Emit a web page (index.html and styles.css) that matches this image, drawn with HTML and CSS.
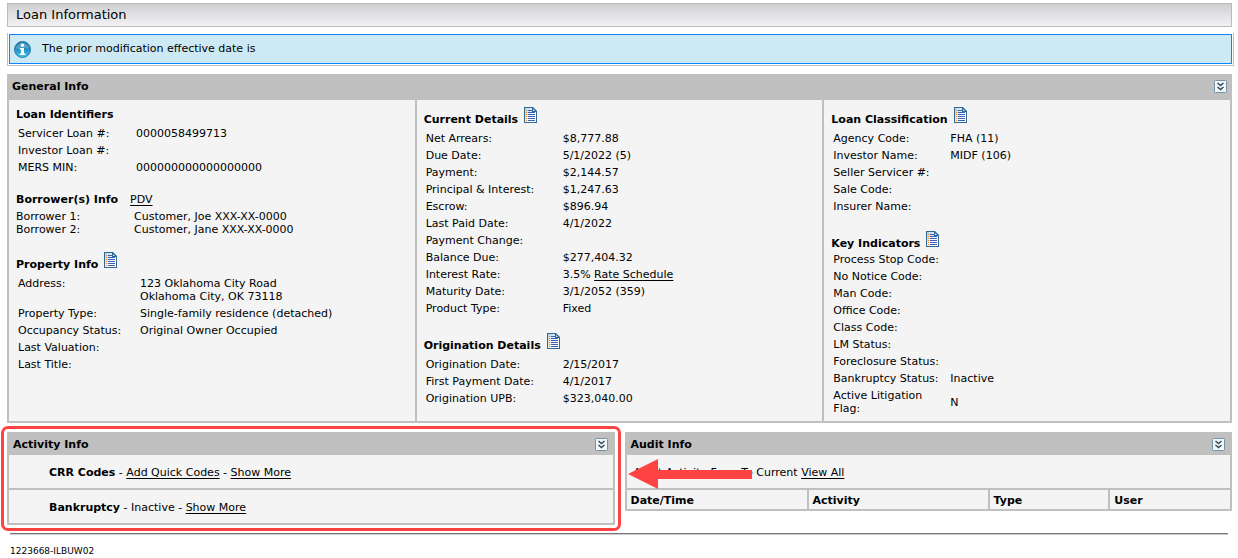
FILE: index.html
```html
<!DOCTYPE html>
<html lang="en">
<head>
<meta charset="utf-8">
<title>Loan Information</title>
<link rel="stylesheet" href="styles.css">
</head>
<body>
<svg class="defs" width="0" height="0" aria-hidden="true">
  <defs>
    <linearGradient id="page-fill" x1="0" y1="0" x2="1" y2="1">
      <stop offset="0" stop-color="#b4d2e6"/><stop offset=".6" stop-color="#ffffff"/>
    </linearGradient>
    <linearGradient id="info-fill" x1="0" y1="0" x2="0" y2="1">
      <stop offset="0" stop-color="#1b6f9f"/><stop offset=".5" stop-color="#2592c4"/><stop offset="1" stop-color="#4cc8ee"/>
    </linearGradient>
  </defs>
  <symbol id="doc" viewBox="0 0 13 16">
    <path d="M0 0H9L13 4V16H0Z" fill="#2f6a94"/>
    <path d="M1 1H8V5H12V15H1Z" fill="url(#page-fill)"/>
    <path d="M9 2L11 4H9Z" fill="#d5e5f0"/>
    <path d="M4 3H8V4H4ZM4 5H11V6H4ZM4 7H11V8H4ZM4 9H11V10H4ZM4 11H11V12H4ZM4 13H11V14H4Z" fill="#3e5fb8"/>
    <path d="M1.800 3H3.200V4H1.800ZM1.800 5H3.200V6H1.800ZM1.800 7H3.200V8H1.800ZM1.800 9H3.200V10H1.800ZM1.800 11H3.200V12H1.800ZM1.800 13H3.200V14H1.800Z" fill="#f98a12"/>
  </symbol>
  <symbol id="chevrons" viewBox="0 0 13 13">
    <rect x=".5" y=".5" width="12" height="12" rx="1" fill="#eef8fb" stroke="#7592a6"/>
    <path d="M3.500 3L6.500 5.500L9.500 3M3.500 7L6.500 9.500L9.500 7" fill="none" stroke="#3b4650" stroke-width="1.500"/>
  </symbol>
</svg>

<h1 class="title">Loan Information</h1>

<div class="notice-frame">
  <div class="notice">
    <svg class="info" viewBox="0 0 17 17" aria-hidden="true">
      <circle cx="8.500" cy="8.500" r="8" fill="url(#info-fill)" stroke="#1d7fae"/>
      <path d="M2 8a6.500 6.500 0 0 1 13 0q-6.500-3-13 0z" fill="#fff" opacity=".22"/>
      <circle cx="8.500" cy="4.200" r="1.700" fill="#fff"/>
      <path d="M5.700 7H10V12.500H11.300V14H5.700V12.500H7V8.500H5.700Z" fill="#fff"/>
    </svg>
    <span>The prior modification effective date is</span>
  </div>
</div>

<section class="panel">
  <header class="bar bar-tall">
    <h2>General Info</h2>
    <button class="toggle" aria-label="Collapse General Info"><svg><use href="#chevrons"/></svg></button>
  </header>
  <div class="columns">
    <div class="column">
      <section class="group">
        <h3 class="plain">Loan Identifiers</h3>
        <table class="fields identifiers">
          <tr><th scope="row">Servicer Loan #:</th><td>0000058499713</td></tr>
          <tr><th scope="row">Investor Loan #:</th><td></td></tr>
          <tr><th scope="row">MERS MIN:</th><td>000000000000000000</td></tr>
        </table>
      </section>
      <section class="group">
        <h3 class="plain">Borrower(s) Info <a href="#">PDV</a></h3>
        <table class="fields dense">
          <tr><th scope="row">Borrower 1:</th><td>Customer, Joe XXX-XX-0000</td></tr>
          <tr><th scope="row">Borrower 2:</th><td>Customer, Jane XXX-XX-0000</td></tr>
        </table>
      </section>
      <section class="group">
        <h3><span>Property Info</span><svg class="doc"><use href="#doc"/></svg></h3>
        <table class="fields property">
          <tr><th scope="row">Address:</th><td>123 Oklahoma City Road<br>Oklahoma City, OK 73118</td></tr>
          <tr><th scope="row">Property Type:</th><td>Single-family residence (detached)</td></tr>
          <tr><th scope="row">Occupancy Status:</th><td>Original Owner Occupied</td></tr>
          <tr><th scope="row">Last Valuation:</th><td></td></tr>
          <tr><th scope="row">Last Title:</th><td></td></tr>
        </table>
      </section>
    </div>
    <div class="column">
      <section class="group">
        <h3><span>Current Details</span><svg class="doc"><use href="#doc"/></svg></h3>
        <table class="fields details">
          <tr><th scope="row">Net Arrears:</th><td>$8,777.88</td></tr>
          <tr><th scope="row">Due Date:</th><td>5/1/2022 (5)</td></tr>
          <tr><th scope="row">Payment:</th><td>$2,144.57</td></tr>
          <tr><th scope="row">Principal &amp; Interest:</th><td>$1,247.63</td></tr>
          <tr><th scope="row">Escrow:</th><td>$896.94</td></tr>
          <tr><th scope="row">Last Paid Date:</th><td>4/1/2022</td></tr>
          <tr><th scope="row">Payment Change:</th><td></td></tr>
          <tr><th scope="row">Balance Due:</th><td>$277,404.32</td></tr>
          <tr><th scope="row">Interest Rate:</th><td>3.5% <a href="#">Rate Schedule</a></td></tr>
          <tr><th scope="row">Maturity Date:</th><td>3/1/2052 (359)</td></tr>
          <tr><th scope="row">Product Type:</th><td>Fixed</td></tr>
        </table>
      </section>
      <section class="group">
        <h3><span>Origination Details</span><svg class="doc"><use href="#doc"/></svg></h3>
        <table class="fields details">
          <tr><th scope="row">Origination Date:</th><td>2/15/2017</td></tr>
          <tr><th scope="row">First Payment Date:</th><td>4/1/2017</td></tr>
          <tr><th scope="row">Origination UPB:</th><td>$323,040.00</td></tr>
        </table>
      </section>
    </div>
    <div class="column">
      <section class="group">
        <h3><span>Loan Classification</span><svg class="doc"><use href="#doc"/></svg></h3>
        <table class="fields">
          <tr><th scope="row">Agency Code:</th><td>FHA (11)</td></tr>
          <tr><th scope="row">Investor Name:</th><td>MIDF (106)</td></tr>
          <tr><th scope="row">Seller Servicer #:</th><td></td></tr>
          <tr><th scope="row">Sale Code:</th><td></td></tr>
          <tr><th scope="row">Insurer Name:</th><td></td></tr>
        </table>
      </section>
      <section class="group">
        <h3 class="tight"><span>Key Indicators</span><svg class="doc"><use href="#doc"/></svg></h3>
        <table class="fields">
          <tr><th scope="row">Process Stop Code:</th><td></td></tr>
          <tr><th scope="row">No Notice Code:</th><td></td></tr>
          <tr><th scope="row">Man Code:</th><td></td></tr>
          <tr><th scope="row">Office Code:</th><td></td></tr>
          <tr><th scope="row">Class Code:</th><td></td></tr>
          <tr><th scope="row">LM Status:</th><td></td></tr>
          <tr><th scope="row">Foreclosure Status:</th><td></td></tr>
          <tr><th scope="row">Bankruptcy Status:</th><td>Inactive</td></tr>
          <tr><th scope="row">Active Litigation Flag:</th><td>N</td></tr>
        </table>
      </section>
    </div>
  </div>
</section>

<div class="lower">
  <section class="panel highlighted">
    <header class="bar">
      <h2>Activity Info</h2>
      <button class="toggle" aria-label="Collapse Activity Info"><svg><use href="#chevrons"/></svg></button>
    </header>
    <div class="line indented"><b>CRR Codes</b> - <a href="#">Add Quick Codes</a> - <a href="#">Show More</a></div>
    <div class="line indented"><b>Bankruptcy</b> - Inactive - <a href="#">Show More</a></div>
  </section>
  <section class="panel audit">
    <header class="bar">
      <h2>Audit Info</h2>
      <button class="toggle" aria-label="Collapse Audit Info"><svg><use href="#chevrons"/></svg></button>
    </header>
    <div class="line">Audit Activity From To Current <a href="#">View All</a></div>
    <table class="log">
      <tr><th class="wide">Date/Time</th><th class="wide">Activity</th><th>Type</th><th>User</th></tr>
    </table>
    <svg class="arrow" viewBox="0 0 124 30" aria-hidden="true"><path d="M0 15L30 0V11H124V20H30V30Z" fill="#ff4343"/></svg>
  </section>
</div>

<footer class="footer">1223668-ILBUW02</footer>
</body>
</html>
```
FILE: styles.css
```css
* { box-sizing: border-box; }

body {
  margin: 0;
  padding: 3px 6px 0 7px;
  background: #fff;
  color: #000;
  font: 11px/13px Verdana, "DejaVu Sans", sans-serif;
}

h1, h2, h3 { margin: 0; font-size: 11px; line-height: 13px; }
a { color: inherit; text-decoration: underline; text-underline-offset: 2px; text-decoration-thickness: 1px; }
table { border-collapse: collapse; }
.defs { position: absolute; }

.title {
  padding: 3px 8px;
  border: 1px solid #bbb;
  background: linear-gradient(#d0d0d2, #f2f2f4);
  font-size: 13px;
  font-weight: normal;
  line-height: 16px;
}

.notice-frame {
  margin: 6px -2px 8px 0;
  padding: 1px;
  border: 1px solid #c0c0c0;
  border-top: 0;
}
.notice {
  display: flex;
  align-items: center;
  gap: 11px;
  height: 30px;
  padding: 0 4px;
  border: 1px solid #0a84ff;
  background: #cdeaf4;
}
.notice span { padding-bottom: 2px; }
.info { width: 17px; height: 17px; }

.panel { border: 2px solid #c0c0c0; background: #f4f4f4; }
.bar {
  display: flex;
  align-items: center;
  justify-content: space-between;
  height: 21px;
  padding: 0 5px 1px 4px;
  background: #c0c0c0;
}
.bar-tall { height: 24px; padding: 0 3px 4px; }
.toggle { display: block; width: 13px; height: 13px; padding: 0; border: 0; background: none; }
.toggle svg { display: block; width: 13px; height: 13px; }

.columns { display: grid; grid-template-columns: repeat(3, minmax(0, 1fr)); gap: 2px; background: #c0c0c0; }
.column {
  display: flex;
  flex-direction: column;
  gap: 16px;
  padding: 7px 7px 4px;
  background: #f4f4f4;
}

h3 { display: flex; gap: 6px; height: 23px; }
h3 span { padding-top: 6px; }
h3 a { margin-left: 6px; font-weight: normal; }
.plain { height: 18px; padding-top: 1px; }
.tight { height: 20px; }
.doc { width: 13px; height: 16px; }

.fields { width: 100%; table-layout: fixed; }
.fields th, .fields td { padding: 2px; text-align: left; font-weight: normal; }
.fields th { width: 117px; vertical-align: top; }
.fields td { vertical-align: middle; }
.fields tr { height: 17px; }
.fields.identifiers th { width: 118px; }
.fields.property th { width: 122px; }
.fields.details th { width: 137px; }
.fields.dense th, .fields.dense td { padding: 0; }
.fields.dense tr { height: 13px; }
.fields.dense th { width: 118px; }

.lower { display: grid; grid-template-columns: repeat(2, minmax(0, 1fr)); align-items: start; gap: 10px; margin-top: 9px; }
.highlighted { outline: 3px solid #ff4343; outline-offset: 3px; border-radius: 1px; }
.line { height: 33px; padding: 11px 7px; white-space: pre-wrap; }
.line + .line { height: 35px; border-top: 2px solid #c0c0c0; }
.indented { padding-left: 40px; }

.audit { position: relative; }
.log { width: 100%; table-layout: fixed; }
.log th { width: 20%; height: 20px; padding: 4px 4px 2px; border: 2px solid #c0c0c0; border-width: 2px 0 0 2px; text-align: left; }
.log th:first-child { border-left: 0; }
.log .wide { width: 30%; }
.arrow { position: absolute; top: 25px; left: 1px; width: 124px; height: 30px; }

.footer {
  margin: 8px 4px 0 3px;
  padding-top: 10px;
  border-top: 2px groove #ccc;
  font-size: 9px;
}
```
